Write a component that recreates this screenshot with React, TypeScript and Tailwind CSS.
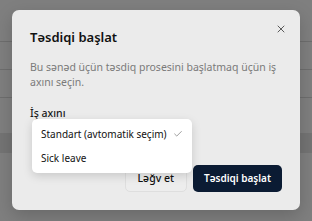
import { Check, X } from "lucide-react";

const font = { fontFamily: '"Noto Sans", "Open Sans", sans-serif' };

export default function App() {
  return (
    <div
      className="relative h-[221px] w-[312px] overflow-hidden bg-[#7f7f7f]"
      style={font}
    >
      {/* dimmed page behind the dialog */}
      <div className="flex flex-col">
        <div className="h-[42px] border-b border-[#6e6e6e]" />
        <div className="h-[28px] border-b border-[#6e6e6e]" />
        <div className="h-[28px] border-b border-[#6e6e6e]" />
        <div className="h-[35px]" />
        <div className="h-[20px] bg-[#747474]" />
      </div>

      <div
        role="dialog"
        className="absolute top-[10px] left-[12px] flex h-[200px] w-[288px] flex-col rounded-[7px] bg-[#ebebeb] p-[18px] shadow-[0_6px_18px_rgba(0,0,0,0.18)]"
      >
        <button
          type="button"
          className="absolute top-[13px] right-[13px] flex h-[12px] w-[12px] items-center justify-center text-[#5a5a5a]"
          aria-label="Bağla"
        >
          <X className="h-[12px] w-[12px]" strokeWidth={2} />
        </button>

        <h2 className="text-[13px] leading-[18px] font-semibold text-[#111111]">
          Təsdiqi başlat
        </h2>
        <p className="mt-[14px] pr-[4px] text-[10.5px] leading-[15px] text-[#7a7a7a]">
          Bu sənəd üçün təsdiq prosesini başlatmaq üçün iş axını seçin.
        </p>

        <label className="mt-[16px] text-[10.5px] leading-[15px] font-medium text-[#1a1a1a]">
          İş axını
        </label>

        <div className="mt-auto flex justify-end gap-[6px]">
          <button
            type="button"
            className="h-[27px] rounded-[5px] border border-[#dedede] bg-[#ededed] px-[12px] text-[10.5px] font-medium text-[#111111]"
          >
            Ləğv et
          </button>
          <button
            type="button"
            className="h-[27px] rounded-[5px] bg-[#0b1b33] px-[11px] text-[10px] font-semibold text-white"
          >
            Təsdiqi başlat
          </button>
        </div>
      </div>

      {/* open select menu */}
      <div
        role="listbox"
        className="absolute top-[119px] left-[32px] w-[160px] rounded-[5px] bg-white p-[3px] shadow-[0_3px_10px_rgba(0,0,0,0.15)]"
      >
        <div className="flex h-[24px] items-center gap-[6px] pl-[6px] text-[10px] whitespace-nowrap text-[#111111]">
          <span>Standart (avtomatik seçim)</span>
          <Check className="h-[10px] w-[10px] shrink-0 text-[#8a8a8a]" strokeWidth={2} />
        </div>
        <div className="flex h-[24px] items-center pl-[6px] text-[10px] text-[#111111]">
          <span>Sick leave</span>
        </div>
      </div>
    </div>
  );
}
